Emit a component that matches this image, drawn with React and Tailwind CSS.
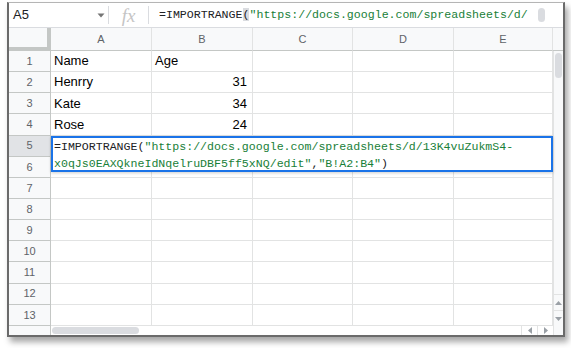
import React from 'react'

const cols = [
  { label: 'A', w: 'w-[101px]' },
  { label: 'B', w: 'w-[101px]' },
  { label: 'C', w: 'w-[100px]' },
  { label: 'D', w: 'w-[101px]' },
  { label: 'E', w: 'w-[99px]' },
]

const data = [
  ['Name', 'Age'],
  ['Henrry', 31],
  ['Kate', 34],
  ['Rose', 24],
]

const rowNums = [1, 2, 3, 4, 5, 6, 7, 8, 9, 10, 11, 12, 13]

const green = 'text-[#188038]'

function Row({ n }) {
  const values = data[n - 1] || []
  return (
    <div className="flex h-[21.15px]">
      <div
        className={`w-[42px] shrink-0 border-r border-b border-[#c4c7c5] flex items-center justify-center text-[11px] text-[#5f6368] ${
          n === 5 ? 'bg-[#e1e3e6]' : 'bg-[#f8f9fa]'
        }`}
      >
        {n}
      </div>
      {cols.map((c, i) => {
        const v = values[i]
        const isNum = typeof v === 'number'
        return (
          <div
            key={c.label}
            className={`${c.w} shrink-0 border-r border-b border-[#e2e3e3] flex items-center px-[3px] text-[13px] text-black ${
              isNum ? 'justify-end pr-[5px]' : ''
            }`}
          >
            {v}
          </div>
        )
      })}
    </div>
  )
}

export default function App() {
  return (
    <div
      className="min-h-screen bg-white pl-[7px] pt-[2px]"
      style={{ fontFamily: '"Liberation Sans", Arial, sans-serif' }}
    >
      <div className="relative w-[558px] h-[335px] border-x-2 border-b-2 border-t border-[#6a6a6a] border-t-[#b5b5b5] bg-white shadow-[3px_5px_6px_rgba(0,0,0,0.35)] flex flex-col">
        {/* formula bar */}
        <div className="h-[25px] shrink-0 flex items-center border-b border-[#dadce0]">
          <div className="w-[98px] flex items-center justify-between pl-[4px] pr-[2px] text-[13px] text-[#202124]">
            <span>A5</span>
            <svg width="8" height="5" viewBox="0 0 8 5">
              <path d="M0.5 0.5 L7.5 0.5 L4 4.5 Z" fill="#757575" />
            </svg>
          </div>
          <div className="w-px h-[18px] bg-[#dadce0] ml-[1px]" />
          <div className="w-[39px] flex items-center justify-center">
            <span
              className="text-[19px] italic text-[#c5c5c5] leading-none"
              style={{ fontFamily: '"Liberation Serif", "Times New Roman", serif' }}
            >
              fx
            </span>
          </div>
          <div className="w-px h-[18px] bg-[#dadce0]" />
          <div
            className="pl-[10px] text-[11.6px] whitespace-nowrap text-[#202124]"
            style={{ fontFamily: '"Liberation Mono", "Courier New", monospace' }}
          >
            =IMPORTRANGE<span className="bg-[#dadce0]">(</span>
            <span className={green}>"https://docs.google.com/spreadsheets/d/</span>
          </div>
          <div className="flex-1" />
          <div className="w-[7px] h-[14px] rounded-full bg-[#dadce0] mr-[18px] shrink-0" />
        </div>

        {/* column headers */}
        <div className="h-[23px] shrink-0 flex bg-[#f8f9fa]">
          <div className="w-[42px] shrink-0 border-r-[4px] border-b-[4px] border-[#c4c7c5] bg-[#f8f9fa]" />
          {cols.map((c) => (
            <div
              key={c.label}
              className={`${c.w} shrink-0 border-r border-b border-[#c4c7c5] border-r-[#e2e3e3] flex items-center justify-center text-[11px] text-[#5f6368]`}
            >
              {c.label}
            </div>
          ))}
          <div className="flex-1 border-b border-[#c4c7c5]" />
        </div>

        {/* grid + vertical scrollbar */}
        <div className="flex h-[275px] shrink-0">
          <div className="flex flex-col">
            {rowNums.map((n) => (
              <Row key={n} n={n} />
            ))}
          </div>
          <div className="flex-1 bg-[#f8f9fa] border-l border-[#e2e3e3] flex flex-col">
            <div className="mx-auto mt-[2px] w-[7px] h-[25px] rounded-full bg-[#dadce0]" />
            <div className="flex-1" />
            <div className="h-[16px] border-t border-[#e2e3e3] flex items-center justify-center">
              <svg width="7" height="4" viewBox="0 0 7 4">
                <path d="M0 4 L3.5 0 L7 4 Z" fill="#9aa0a6" />
              </svg>
            </div>
            <div className="h-[16px] border-t border-[#e2e3e3] flex items-center justify-center">
              <svg width="7" height="4" viewBox="0 0 7 4">
                <path d="M0 0 L3.5 4 L7 0 Z" fill="#9aa0a6" />
              </svg>
            </div>
          </div>
        </div>

        {/* horizontal scrollbar */}
        <div className="flex-1 flex">
          <div className="w-[42px] shrink-0 bg-[#f8f9fa] border-r border-[#c4c7c5]" />
          <div className="flex-1 flex items-center pl-[1px]">
            <div className="w-[87px] h-[7px] rounded-full bg-[#dadce0]" />
          </div>
          <div className="w-[16px] border-l border-[#e2e3e3] flex items-center justify-center">
            <svg width="4" height="7" viewBox="0 0 4 7">
              <path d="M4 0 L0 3.5 L4 7 Z" fill="#9aa0a6" />
            </svg>
          </div>
          <div className="w-[16px] border-l border-[#e2e3e3] flex items-center justify-center">
            <svg width="4" height="7" viewBox="0 0 4 7">
              <path d="M0 0 L4 3.5 L0 7 Z" fill="#9aa0a6" />
            </svg>
          </div>
          <div className="w-[10px] bg-[#f8f9fa] border-l border-[#e2e3e3]" />
        </div>

        {/* in-cell editor over A5 */}
        <div
          className="absolute left-[42px] top-[133px] w-[502px] h-[36px] border-2 border-[#1a73e8] bg-white pl-[1px] text-[11.6px] leading-[17px] text-[#202124] shadow-[0_1px_3px_rgba(0,0,0,0.2)]"
          style={{ fontFamily: '"Liberation Mono", "Courier New", monospace' }}
        >
          <div className="whitespace-pre">
            =IMPORTRANGE(<span className={green}>"https://docs.google.com/spreadsheets/d/13K4vuZukmS4-</span>
          </div>
          <div className="whitespace-pre">
            <span className={green}>x0qJs0EAXQkneIdNqelruDBF5ff5xNQ/edit"</span>,
            <span className={green}>"B!A2:B4"</span>)
          </div>
        </div>
      </div>
    </div>
  )
}
